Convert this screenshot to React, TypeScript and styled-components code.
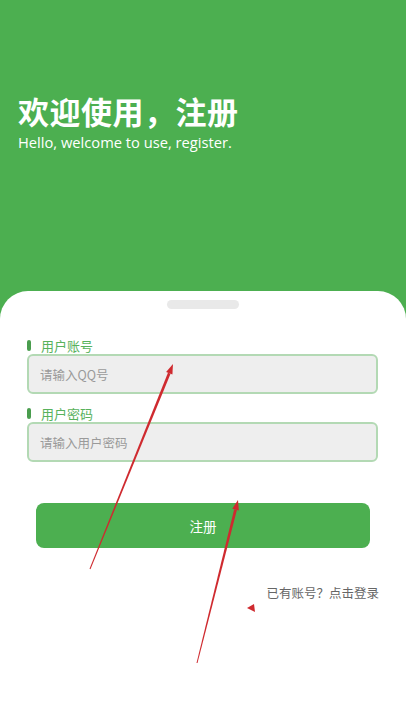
import React from "react";
import styled, { createGlobalStyle } from "styled-components";

const GlobalStyle = createGlobalStyle`
  html, body {
    margin: 0;
    padding: 0;
  }
  body {
    font-family: "Noto Sans CJK SC", "Noto Sans", sans-serif;
    background: #ffffff;
  }
  * {
    box-sizing: border-box;
  }
`;

const Page = styled.div`
  position: relative;
  width: 406px;
  min-height: 721px;
  background: #4caf50;
  display: flex;
  flex-direction: column;
  overflow: hidden;
`;

const Header = styled.div`
  height: 291px;
  padding: 91px 18px 0;
  color: #ffffff;
`;

const Title = styled.h1`
  margin: 0;
  font-family: "Noto Sans CJK SC", sans-serif;
  font-size: 31px;
  font-weight: 700;
  line-height: 40px;
  letter-spacing: 0.5px;
`;

const Subtitle = styled.p`
  margin: 0;
  font-family: "Open Sans", "Noto Sans", sans-serif;
  font-size: 14.7px;
  line-height: 22px;
`;

const Card = styled.div`
  flex: 1;
  background: #ffffff;
  border-radius: 28px 28px 0 0;
  padding: 9px 0 0;
  display: flex;
  flex-direction: column;
`;

const Handle = styled.div`
  align-self: center;
  width: 72px;
  height: 9px;
  border-radius: 5px;
  background: #e9e9e9;
`;

const Form = styled.div`
  margin-top: 28px;
  padding: 0 28px 0 27px;
  display: flex;
  flex-direction: column;
  gap: 11px;
`;

const Field = styled.div`
  display: flex;
  flex-direction: column;
`;

const Label = styled.div`
  display: flex;
  align-items: center;
  gap: 10px;
  height: 17px;
  font-size: 13px;
  color: #58b25c;
  &::before {
    content: "";
    width: 4px;
    height: 11px;
    border-radius: 2px;
    background: #4a9d4e;
  }
`;

const Input = styled.input`
  width: 100%;
  height: 40px;
  border: 2px solid #b3d9b4;
  border-radius: 6px;
  background: #eeeeee;
  padding: 0 11px;
  font-family: "Noto Sans CJK SC", sans-serif;
  font-size: 12.5px;
  color: #333;
  outline: none;
  &::placeholder {
    color: #9a9a9a;
  }
`;

const SubmitButton = styled.button`
  margin: 41px 36px 0 36px;
  height: 45px;
  border: none;
  border-radius: 8px;
  background: #4caf50;
  color: #ffffff;
  font-family: "Noto Sans CJK SC", sans-serif;
  font-size: 13.5px;
`;

const LoginLink = styled.div`
  margin-top: 36px;
  padding-right: 27px;
  text-align: right;
  font-size: 12.5px;
  line-height: 18px;
  color: #666666;
`;

const Overlay = styled.svg`
  position: absolute;
  left: 0;
  top: 0;
  pointer-events: none;
`;

type Pt = [number, number];

function arrowShapes(tail: Pt, tip: Pt) {
  const dx = tip[0] - tail[0];
  const dy = tip[1] - tail[1];
  const len = Math.hypot(dx, dy);
  const ux = dx / len;
  const uy = dy / len;
  const px = -uy;
  const py = ux;
  const headLen = 10;
  const headHalf = 3.4;
  const bx = tip[0] - ux * headLen;
  const by = tip[1] - uy * headLen;
  const w0 = 0.5;
  const w1 = 1.4;
  const shaft = [
    [tail[0] + px * w0, tail[1] + py * w0],
    [bx + px * w1, by + py * w1],
    [bx - px * w1, by - py * w1],
    [tail[0] - px * w0, tail[1] - py * w0],
  ];
  const head = [
    [tip[0], tip[1]],
    [bx + px * headHalf, by + py * headHalf],
    [bx - px * headHalf, by - py * headHalf],
  ];
  const fmt = (pts: number[][]) => pts.map((p) => p.join(",")).join(" ");
  return { shaft: fmt(shaft), head: fmt(head) };
}

function Arrow({ tail, tip }: { tail: Pt; tip: Pt }) {
  const { shaft, head } = arrowShapes(tail, tip);
  return (
    <g fill="#cf2a2f">
      <polygon points={shaft} />
      <polygon points={head} />
    </g>
  );
}

export default function App() {
  return (
    <>
      <GlobalStyle />
      <Page>
        <Header>
          <Title>欢迎使用，注册</Title>
          <Subtitle>Hello, welcome to use, register.</Subtitle>
        </Header>
        <Card>
          <Handle />
          <Form>
            <Field>
              <Label>用户账号</Label>
              <Input placeholder="请输入QQ号" />
            </Field>
            <Field>
              <Label>用户密码</Label>
              <Input type="password" placeholder="请输入用户密码" />
            </Field>
          </Form>
          <SubmitButton>注册</SubmitButton>
          <LoginLink>已有账号？点击登录</LoginLink>
        </Card>
        <Overlay width="406" height="721" viewBox="0 0 406 721">
          <Arrow tail={[90, 569]} tip={[173, 364]} />
          <Arrow tail={[197, 663]} tip={[238, 500]} />
          <polygon points="247,608 254,604 255,612" fill="#cf2a2f" />
        </Overlay>
      </Page>
    </>
  );
}
